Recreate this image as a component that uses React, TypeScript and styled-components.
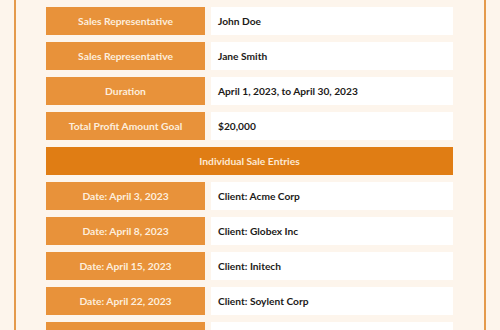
import React from "react";
import styled, { createGlobalStyle } from "styled-components";

const GlobalStyle = createGlobalStyle`
    html, body {
        margin: 0;
        padding: 0;
        background: #fdf5ec;
        font-family: Lato, "Open Sans", sans-serif;
    }
`;

const details = [
    { label: "Sales Representative", value: "John Doe" },
    { label: "Sales Representative", value: "Jane Smith" },
    { label: "Duration", value: "April 1, 2023, to April 30, 2023" },
    { label: "Total Profit Amount Goal", value: "$20,000" },
];

const entries = [
    { date: "April 3, 2023", client: "Acme Corp" },
    { date: "April 8, 2023", client: "Globex Inc" },
    { date: "April 15, 2023", client: "Initech" },
    { date: "April 22, 2023", client: "Soylent Corp" },
];

const App: React.FC = () => (
    <>
        <GlobalStyle />
        <Frame>
            <Table>
                {details.map((d, i) => (
                    <React.Fragment key={"d" + i}>
                        <Label>{d.label}</Label>
                        <Value>{d.value}</Value>
                    </React.Fragment>
                ))}
                <Header>Individual Sale Entries</Header>
                {entries.map((e, i) => (
                    <React.Fragment key={"e" + i}>
                        <Label>Date: {e.date}</Label>
                        <Value>Client: {e.client}</Value>
                    </React.Fragment>
                ))}
                {/* next entry, scrolled below the fold */}
                <Label />
                <Value />
            </Table>
        </Frame>
    </>
);

const Frame = styled.div`
    margin: 0 14px;
    height: 330px;
    overflow: hidden;
    box-sizing: border-box;
    border-left: 2px solid #e49a4c;
    border-right: 2px solid #e49a4c;
    padding: 7px 31px 0 30px;
`;

const Table = styled.div`
    display: grid;
    grid-template-columns: 159px 1fr;
    grid-auto-rows: 28px;
    column-gap: 6px;
    row-gap: 7px;
`;

const Label = styled.div`
    display: flex;
    align-items: center;
    justify-content: center;
    background: #e8923a;
    color: #fdeedd;
    font-size: 10.3px;
    font-weight: 700;
`;

const Value = styled.div`
    display: flex;
    align-items: center;
    padding-left: 7px;
    background: #ffffff;
    color: #1c1a18;
    font-size: 10.2px;
    font-weight: 700;
`;

const Header = styled.div`
    grid-column: 1 / -1;
    display: flex;
    align-items: center;
    justify-content: center;
    background: #e07d14;
    color: #fde9d2;
    font-size: 10.3px;
    font-weight: 700;
`;

export default App;
